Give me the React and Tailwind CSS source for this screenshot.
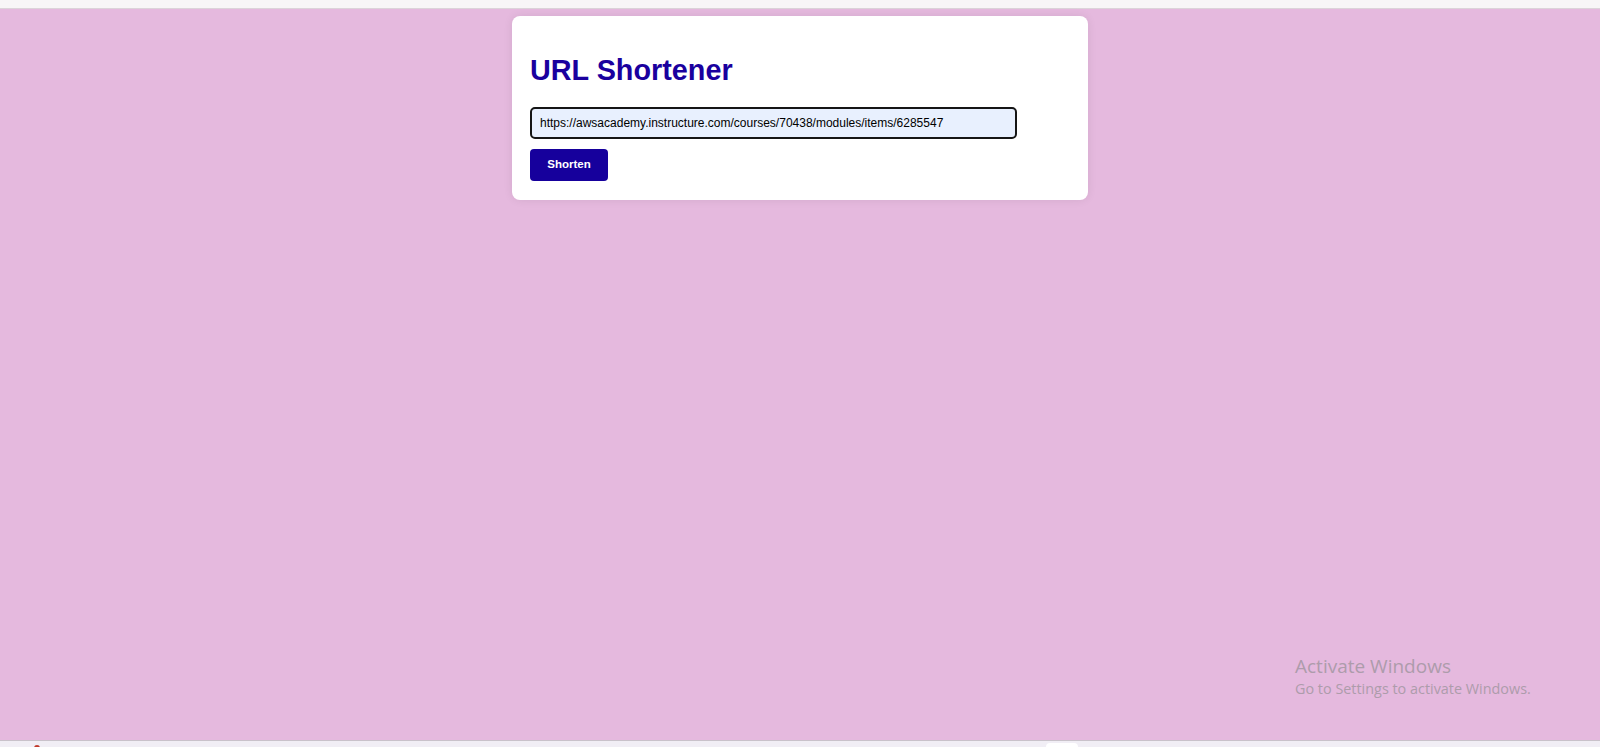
import { useState } from "react"

export default function App() {
  const [url, setUrl] = useState("https://awsacademy.instructure.com/courses/70438/modules/items/6285547")

  return (
    <div className="h-[747px] flex flex-col font-['Liberation_Sans',Arial,sans-serif] overflow-hidden">
      <div className="h-[9px] bg-[#f8f5f7] border-b border-[#dcd3d9]" />

      <main className="relative flex-1 bg-[#e5b9de]">
        <div className="mx-auto mt-[7px] w-[576px] rounded-[8px] bg-white px-[18px] pt-[20px] pb-[19px] shadow-[0_0_10px_rgba(0,0,0,0.08)]">
          <h1 className="mt-[18px] mb-[21px] text-[28.8px] leading-[32px] font-bold text-[#1a009e]">URL Shortener</h1>
          <input
            type="text"
            value={url}
            onChange={(e) => setUrl(e.target.value)}
            className="block h-[32px] w-[487px] rounded-[5px] border-2 border-[#151515] bg-[#e8f0fe] px-[8px] text-[12px] text-black outline-none"
          />
          <button className="mt-[10px] block h-[32px] w-[78px] rounded-[4px] bg-[#16009c] text-[11.5px] font-bold text-white">
            Shorten
          </button>
        </div>

        {/* windows watermark */}
        <div className="absolute left-[1295px] top-[645px] font-['Open_Sans','Noto_Sans',sans-serif] text-[#ad9cab]">
          <div className="text-[19px] leading-[25px]">Activate Windows</div>
          <div className="text-[14.4px] leading-[20px]">Go to Settings to activate Windows.</div>
        </div>
      </main>

      <div className="h-[7px] bg-[#f1eef5] border-t border-[#c9c2ca] flex">
        <div className="ml-[34px] mt-[4px] h-[4px] w-[6px] rounded-t-full bg-[#c0392b]" />
        <div className="ml-[1006px] mt-[2px] h-[6px] w-[32px] rounded-t-[4px] bg-white" />
      </div>
    </div>
  )
}
